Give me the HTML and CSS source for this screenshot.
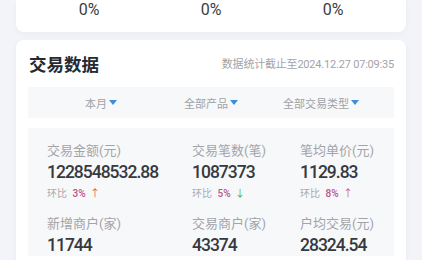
FILE: index.html
```html
<!DOCTYPE html>
<html lang="zh-CN">
<head>
  <meta charset="UTF-8">
  <meta name="viewport" content="width=device-width, initial-scale=1.0">
  <title>交易数据</title>
  <link rel="stylesheet" href="styles.css">
</head>
<body>
  <div class="page">
    <div class="card top-card">
      <div class="pct-row">
        <div class="pct">0%</div>
        <div class="pct">0%</div>
        <div class="pct">0%</div>
      </div>
    </div>

    <div class="card trade-card">
      <div class="card-head">
        <h2>交易数据</h2>
        <span class="stamp">数据统计截止至2024.12.27 07:09:35</span>
      </div>

      <div class="filters">
        <div class="filter">本月<span class="caret"></span></div>
        <div class="filter">全部产品<span class="caret"></span></div>
        <div class="filter">全部交易类型<span class="caret"></span></div>
      </div>

      <div class="stats">
        <div class="stat">
          <div class="label">交易金额(元)</div>
          <div class="value">1228548532.88</div>
          <div class="rate">环比 <b>3%</b> <i class="up">↑</i></div>
        </div>
        <div class="stat">
          <div class="label">交易笔数(笔)</div>
          <div class="value">1087373</div>
          <div class="rate">环比 <b>5%</b> <i class="down">↓</i></div>
        </div>
        <div class="stat">
          <div class="label">笔均单价(元)</div>
          <div class="value">1129.83</div>
          <div class="rate">环比 <b>8%</b> <i class="up">↑</i></div>
        </div>
        <div class="stat">
          <div class="label">新增商户(家)</div>
          <div class="value">11744</div>
        </div>
        <div class="stat">
          <div class="label">交易商户(家)</div>
          <div class="value">43374</div>
        </div>
        <div class="stat">
          <div class="label">户均交易(元)</div>
          <div class="value">28324.54</div>
        </div>
      </div>
    </div>
  </div>
</body>
</html>
```

FILE: styles.css
```css
body {
  margin: 0;
  background: #f3f4f9;
  font-family: Roboto, "Noto Sans", "Noto Sans CJK SC", sans-serif;
  color: #2b2f36;
}
.page {
  padding: 0 16px;
}
.card {
  background: #fff;
  border-radius: 8px;
  box-shadow: 0 2px 6px rgba(40, 50, 80, 0.04);
}
.top-card {
  border-radius: 0 0 8px 8px;
  padding: 1px 12px 13px;
}
.pct-row {
  display: grid;
  grid-template-columns: 1fr 1fr 1fr;
}
.pct {
  text-align: center;
  font-size: 16px;
  line-height: 18px;
  color: #3a3d42;
}
.trade-card {
  margin-top: 8px;
  padding: 11px 12px 20px;
}
.card-head {
  display: flex;
  justify-content: space-between;
  align-items: center;
  height: 24px;
  padding-left: 1px;
}
.card-head h2 {
  margin: 0;
  font-size: 17.5px;
  font-weight: 700;
  color: #262a30;
}
.stamp {
  font-size: 11px;
  letter-spacing: -0.2px;
  color: #a2a4a8;
}
.filters {
  margin-top: 12px;
  height: 31px;
  background: #f7f8fa;
  display: grid;
  grid-template-columns: 99px 99px 99px;
  align-items: center;
  padding-left: 57px;
  font-size: 11px;
  color: #a0a2a6;
}
.filter {
  display: flex;
  align-items: center;
}
.caret {
  width: 0;
  height: 0;
  margin-left: 2px;
  border-left: 4px solid transparent;
  border-right: 4px solid transparent;
  border-top: 5px solid #3b8fdc;
}
.stats {
  margin-top: 10px;
  background: #f7f8fa;
  padding: 14px 0 0 19px;
  display: grid;
  grid-template-columns: 145px 108px 1fr;
  row-gap: 14px;
}
.label {
  font-size: 13px;
  line-height: 18px;
  color: #a3a4a8;
}
.value {
  margin-top: 1px;
  font-size: 17.5px;
  line-height: 22px;
  font-weight: 500;
  letter-spacing: -1px;
  color: #36393e;
}
.rate {
  margin-top: 4px;
  font-size: 10px;
  line-height: 14px;
  color: #a8aaae;
}
.rate b {
  margin-left: 3px;
  font-weight: 500;
  color: #b9578d;
}
.rate i {
  font-style: normal;
  margin-left: 2px;
}
.rate .up {
  color: #d9534f;
}
.rate .down {
  color: #4caf50;
}
```
